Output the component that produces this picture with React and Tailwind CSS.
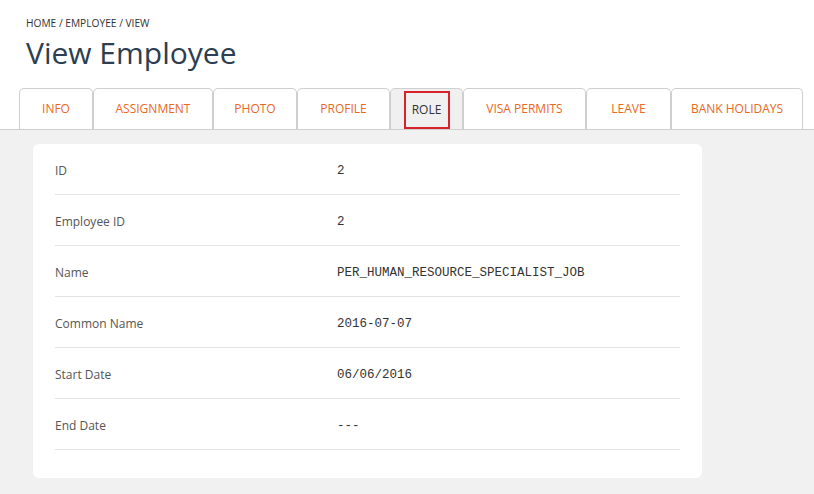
import React from 'react';

const tabs = [
  { label: 'INFO', w: 'w-[74px]' },
  { label: 'ASSIGNMENT', w: 'w-[120px]' },
  { label: 'PHOTO', w: 'w-[84px]' },
  { label: 'PROFILE', w: 'w-[93px]' },
  { label: 'ROLE', w: 'w-[73px]', active: true },
  { label: 'VISA PERMITS', w: 'w-[123px]' },
  { label: 'LEAVE', w: 'w-[85px]' },
  { label: 'BANK HOLIDAYS', w: 'w-[132px]' },
];

const rows = [
  ['ID', '2'],
  ['Employee ID', '2'],
  ['Name', 'PER_HUMAN_RESOURCE_SPECIALIST_JOB'],
  ['Common Name', '2016-07-07'],
  ['Start Date', '06/06/2016'],
  ['End Date', '---'],
];

const App = () => {
  return (
    <div className="w-[814px] h-[494px] overflow-hidden bg-[#f1f1f1] font-['Open_Sans',sans-serif]">
      {/* Header */}
      <div className="bg-white">
        <div className="pl-[26px] pt-[16px]">
          <div className="text-[10.2px] leading-[14px] text-[#333]">HOME / EMPLOYEE / VIEW</div>
          <h1 className="text-[30px] leading-[40px] text-[#2c3e50] mt-[3px]">View Employee</h1>
        </div>

        {/* Tabs */}
        <div className="flex pl-[19px] mt-[15px] border-b border-[#cfcfcf]">
          {tabs.map((t) => (
            <div
              key={t.label}
              className={`${t.w} h-[41px] flex items-center justify-center border border-b-0 border-[#cfcfcf] rounded-t-[5px] text-[12px] ${
                t.active ? 'bg-[#f0f0f0] text-[#333]' : 'bg-white text-[#e8681e]'
              }`}
            >
              {t.active ? (
                <span className="border-2 border-[#d8232a] w-[46px] h-[38px] mt-[2px] flex items-center justify-center">
                  {t.label}
                </span>
              ) : (
                t.label
              )}
            </div>
          ))}
        </div>
      </div>

      {/* Content card */}
      <div className="pt-[14px] pl-[33px]">
        <div className="w-[669px] bg-white rounded-[6px] px-[22px] pb-[28px]">
          {rows.map(([label, value]) => (
            <div key={label} className="flex items-center h-[51px] pt-[4px] border-b border-[#e3e3e3]">
              <div className="w-[282px] text-[12px] text-[#555]">{label}</div>
              <div className="text-[12.5px] text-[#333] font-['Liberation_Mono',monospace]">{value}</div>
            </div>
          ))}
        </div>
      </div>
    </div>
  );
};

export default App;
